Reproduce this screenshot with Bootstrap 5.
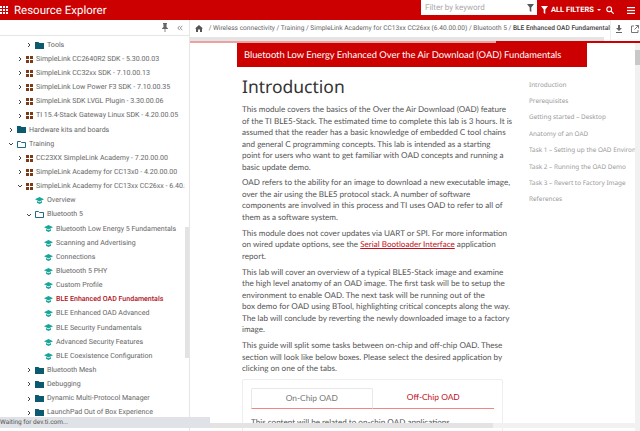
<!DOCTYPE html>
<html lang="en">
<head>
<meta charset="utf-8">
<title>Resource Explorer</title>
<link href="https://cdn.jsdelivr.net/npm/bootstrap@5.3.0/dist/css/bootstrap.min.css" rel="stylesheet">
<style>
html,body{height:431px;overflow:hidden;margin:0}
body{font-family:Roboto,sans-serif;font-size:9.5px;color:#555;position:relative;background:#fff;text-rendering:geometricPrecision}
.topbar{height:20px;background:#cc0000;color:#fff}
.brand-t{font-size:11.500px;line-height:16px;margin-left:5px}
.filter-box{width:116px;height:15px;background:#fff;color:#aaa;font-size:8px;padding:0 3px 0 4px;align-self:flex-start}
.filt-lbl{font-size:7.500px;font-weight:700;width:69px;gap:3px;padding-left:4px}
.srch-g{margin-right:13px}
.ham-g{margin-right:5px}
.main-a{height:411px}
.side{width:190px;flex:none;border-right:1px solid #e6e6e6;position:relative;overflow:hidden}
.side-tool{height:16px;border-bottom:1px solid #e6e6e6;padding-right:6px;gap:9px}
.tree-row{height:14.150px;white-space:nowrap;font-size:7.050px;color:#666;gap:3px}
.tree-row.active-row{color:#b0121b;font-weight:500}
.lvl0{padding-left:8px}.lvl1{padding-left:17px}.lvl2{padding-left:26px}.lvl3{padding-left:35px}
.tree-wrap{padding-top:2px;width:185px;overflow:hidden}
.chev{width:6px;flex:none}
.ico{flex:none}
.side-thumb{position:absolute;left:185px;top:207px;width:5px;height:131px;background:#e3e3e3}
.right-p{flex:1;min-width:0;position:relative}
.crumb-row{height:21px}
.crumb-box{width:420px;flex:none;position:relative;padding:2px 0 0 5px;white-space:nowrap;overflow:hidden;font-size:6.600px;line-height:12px;color:#666}
.crumb-box b{font-weight:500;color:#444}
.crumb-track{position:absolute;left:0;bottom:0;width:414px;height:4px;background:#e4e4e4}
.act-box{flex:1;border-left:1px solid #eee;gap:8px;padding-left:4px;padding-bottom:4px}
.prog{height:2px;background:#f0a0a0;width:100%;position:relative}
.prog-red{position:absolute;left:306px;right:0;top:0;height:2px;background:#cc0000}
.page-a{position:relative;height:388px;overflow:hidden}
.title-bar{position:absolute;left:47px;top:0;width:350px;height:24px;background:#cc0000;color:#fff;font:9.350px/24px Lato,sans-serif;padding-left:7px;white-space:nowrap}
.doc-col{position:absolute;left:52px;top:32px;width:266px;font-family:Lato,sans-serif;font-size:8.100px;line-height:11.500px;color:#555}
.doc-col h1{font-family:"Noto Sans",sans-serif;font-size:17.500px;font-weight:400;color:#333;line-height:24px;margin:0 0 5px}
.doc-col p{margin:0 0 4.400px;white-space:nowrap}
.doc-col a{color:#c01020;text-decoration:underline}
.tab-box{border:1px solid #eee;border-radius:2px;width:261px;padding:8px 8px 0;height:60px;margin-top:1px;white-space:nowrap;overflow:hidden}
.tab-one{width:122px;text-align:center;padding:4px 0 6px;height:21px;font-size:8.400px}
.tab-a{border:1px solid #e8e8e8;border-bottom:1px solid #e88;border-radius:2px 2px 0 0;color:#777}
.tab-b{border-bottom:1px solid #e88;color:#c01020}
.toc-col{position:absolute;left:339px;top:33.500px;width:106px;overflow:hidden;white-space:nowrap;font-family:"Noto Sans",sans-serif;font-size:6.400px;color:#9a9a9a;line-height:16.400px}
.doc-track{position:absolute;left:445px;top:0;width:5px;height:388px;background:#f1f1f1}
.doc-thumb{position:absolute;left:445px;top:7px;width:5px;height:15px;background:#c8c8c8}
.status-txt{position:absolute;left:0;top:417px;width:210px;height:11px;background:#dfe2e6;font-size:6.500px;line-height:11px;color:#555}
.h-rail{position:absolute;left:210px;top:423px;width:430px;height:5px;background:#f1f1f1}
.h-rail-thumb{width:283px;height:5px;background:#e3e3e3}
</style>
</head>
<body>
<header class="topbar d-flex align-items-center">
  <svg width="9" height="9" viewBox="0 0 9 9" fill="#fff"><rect x="0" y="0" width="2" height="2"/><rect x="3" y="0" width="2" height="2"/><rect x="6" y="0" width="2" height="2"/><rect x="0" y="3" width="2" height="2"/><rect x="3" y="3" width="2" height="2"/><rect x="6" y="3" width="2" height="2"/><rect x="0" y="6" width="2" height="2"/><rect x="3" y="6" width="2" height="2"/><rect x="6" y="6" width="2" height="2"/></svg>
  <span class="brand-t">Resource Explorer</span>
  <div class="ms-auto d-flex align-items-center h-100">
    <div class="filter-box d-flex align-items-center justify-content-between"><span>Filter by keyword</span>
      <svg width="7" height="8" viewBox="0 0 7 8" fill="#555"><path d="M0 0h7L4.300 3.600V8L2.700 7V3.600z"/></svg></div>
    <div class="filt-lbl d-flex align-items-center"><svg width="7" height="8" viewBox="0 0 7 8" fill="#fff"><path d="M0 0h7L4.300 3.600V8L2.700 7V3.600z"/></svg>ALL FILTERS <svg width="4" height="2" viewBox="0 0 4 2" fill="#fff"><path d="M0 0h4L2 2z"/></svg></div>
    <svg class="srch-g" width="8" height="8" viewBox="0 0 8 8" fill="none" stroke="#fff" stroke-width="1.100"><circle cx="3.200" cy="3.200" r="2.400"/><path d="M5 5l2.700 2.700"/></svg>
    <svg class="ham-g" width="8" height="7" viewBox="0 0 8 7" fill="#fff"><rect width="8" height="1.200"/><rect y="2.900" width="8" height="1.200"/><rect y="5.800" width="8" height="1.200"/></svg>
  </div>
</header>
<div class="main-a d-flex">
  <aside class="side">
    <div class="side-tool d-flex justify-content-end align-items-center">
      <svg width="6" height="9" viewBox="0 0 6 9" fill="#666"><path d="M1 0h4v1L4.500 1.500V4L6 5.500V6H3.400V9h-.8V6H0v-.5L1.500 4V1.500L1 1z"/></svg>
      <svg width="6" height="6" viewBox="0 0 6 6" fill="none" stroke="#777" stroke-width=".8"><path d="M2.800.8L.8 3l2 2.200M5.300.8L3.300 3l2 2.200"/></svg>
    </div>
    <div class="tree-wrap" id="tree"></div>
    <div class="side-thumb"></div>
  </aside>
  <div class="right-p">
    <div class="crumb-row d-flex">
      <div class="crumb-box">
        <svg width="8" height="7" viewBox="0 0 8 7" fill="#555" class="me-1"><path d="M4 0l4 3.500H7V7H5V4.500H3V7H1V3.500H0z"/></svg> / Wireless connectivity / Training / SimpleLink Academy for CC13xx CC26xx (6.40.00.00) / Bluetooth 5 / <b>BLE Enhanced OAD Fundamentals</b>
        <div class="crumb-track"></div>
      </div>
      <div class="act-box d-flex align-items-center">
        <svg width="8" height="8" viewBox="0 0 8 8" fill="#666"><path d="M3 0h2v3h2L4 6 1 3h2zM1 7h6v1H1z"/></svg>
        <svg width="8" height="8" viewBox="0 0 8 8" fill="none" stroke="#666" stroke-width=".9"><path d="M3 1H.5v6.500H7V5M4.500.5h3v3M7.500.5L3.500 4.500"/></svg>
      </div>
    </div>
    <div class="prog"><div class="prog-red"></div></div>
    <div class="page-a">
      <div class="title-bar">Bluetooth Low Energy Enhanced Over the Air Download (OAD) Fundamentals</div>
      <div class="doc-col">
        <h1>Introduction</h1>
        <p>This module covers the basics of the Over the Air Download (OAD) feature<br>of the TI BLE5-Stack. The estimated time to complete this lab is 3 hours. It is<br>assumed that the reader has a basic knowledge of embedded C tool chains<br>and general C programming concepts. This lab is intended as a starting<br>point for users who want to get familiar with OAD concepts and running a<br>basic update demo.</p>
        <p>OAD refers to the ability for an image to download a new executable image,<br>over the air using the BLE5 protocol stack. A number of software<br>components are involved in this process and TI uses OAD to refer to all of<br>them as a software system.</p>
        <p>This module does not cover updates via UART or SPI. For more information<br>on wired update options, see the <a href="#">Serial Bootloader Interface</a> application<br>report.</p>
        <p>This lab will cover an overview of a typical BLE5-Stack image and examine<br>the high level anatomy of an OAD image. The first task will be to setup the<br>environment to enable OAD. The next task will be running out of the<br>box demo for OAD using BTool, highlighting critical concepts along the way.<br>The lab will conclude by reverting the newly downloaded image to a factory<br>image.</p>
        <p>This guide will split some tasks between on-chip and off-chip OAD. These<br>section will look like below boxes. Please select the desired application by<br>clicking on one of the tabs.</p>
        <div class="tab-box">
          <div class="d-flex"><div class="tab-one tab-a">On-Chip OAD</div><div class="tab-one tab-b">Off-Chip OAD</div></div>
          <div class="mt-2">This content will be related to on-chip OAD applications.</div>
        </div>
      </div>
      <nav class="toc-col">Introduction<br>Prerequisites<br>Getting started – Desktop<br>Anatomy of an OAD<br>Task 1 – Setting up the OAD Environment<br>Task 2 – Running the OAD Demo<br>Task 3 – Revert to Factory Image<br>References</nav>
      <div class="doc-track"></div><div class="doc-thumb"></div>
    </div>
  </div>
</div>
<div class="h-rail"><div class="h-rail-thumb"></div></div>
<div class="status-txt">Waiting for dev.ti.com...</div>
<script>
const F='<svg class="ico" width="9" height="7" viewBox="0 0 9 7" fill="#0b5a70"><path d="M0 0h3.500l1 1H9v6H0z"/></svg>';
const O='<svg class="ico" width="9" height="7" viewBox="0 0 9 7" fill="none" stroke="#0b5a70" stroke-width=".9"><path d="M.5.5h3l1 1h4v5h-8z"/></svg>';
const G='<svg class="ico" width="7" height="7" viewBox="0 0 7 7" fill="#7a3b16"><rect width="3" height="3"/><rect x="4" width="3" height="3"/><rect y="4" width="3" height="3"/><rect x="4" y="4" width="3" height="3"/></svg>';
const C='<svg class="ico" width="9" height="7" viewBox="0 0 9 7" fill="#1aa59a"><path d="M4.500 0L9 2.300 4.500 4.600 0 2.300z"/><path d="M2 4l2.500 1.300L7 4v1.700L4.500 7 2 5.700z"/></svg>';
const R='<svg class="chev" width="6" height="6" viewBox="0 0 6 6" fill="none" stroke="#444" stroke-width="1"><path d="M2 1l2 2-2 2"/></svg>';
const D='<svg class="chev" width="6" height="6" viewBox="0 0 6 6" fill="none" stroke="#444" stroke-width="1"><path d="M1 2l2 2 2-2"/></svg>';
const N='<span class="chev"></span>';
const rows=[[2,R,F,'Tools'],[1,R,G,'SimpleLink CC2640R2 SDK - 5.30.00.03'],[1,R,G,'SimpleLink CC32xx SDK - 7.10.00.13'],[1,R,G,'SimpleLink Low Power F3 SDK - 7.10.00.35'],[1,R,G,'SimpleLink SDK LVGL Plugin - 3.30.00.06'],[1,R,G,'TI 15.4-Stack Gateway Linux SDK - 4.20.00.05'],[0,R,F,'Hardware kits and boards'],[0,D,O,'Training'],[1,R,G,'CC23XX SimpleLink Academy - 7.20.00.00'],[1,R,G,'SimpleLink Academy for CC13x0 - 4.20.00.00'],[1,D,G,'SimpleLink Academy for CC13xx CC26xx - 6.40.00.00'],[2,N,C,'Overview'],[2,D,O,'Bluetooth 5'],[3,N,C,'Bluetooth Low Energy 5 Fundamentals'],[3,N,C,'Scanning and Advertising'],[3,N,C,'Connections'],[3,N,C,'Bluetooth 5 PHY'],[3,N,C,'Custom Profile'],[3,N,C,'BLE Enhanced OAD Fundamentals',1],[3,N,C,'BLE Enhanced OAD Advanced'],[3,N,C,'BLE Security Fundamentals'],[3,N,C,'Advanced Security Features'],[3,N,C,'BLE Coexistence Configuration'],[2,R,F,'Bluetooth Mesh'],[2,R,F,'Debugging'],[2,R,F,'Dynamic Multi-Protocol Manager'],[2,R,F,'LaunchPad Out of Box Experience']];
document.getElementById('tree').innerHTML=rows.map(r=>`<div class="tree-row d-flex align-items-center lvl${r[0]}${r[4]?' active-row':''}">${r[1]}${r[2]}<span>${r[3]}</span></div>`).join('');
</script>
<script src="https://cdn.jsdelivr.net/npm/bootstrap@5.3.0/dist/js/bootstrap.bundle.min.js"></script>
</body>
</html>
